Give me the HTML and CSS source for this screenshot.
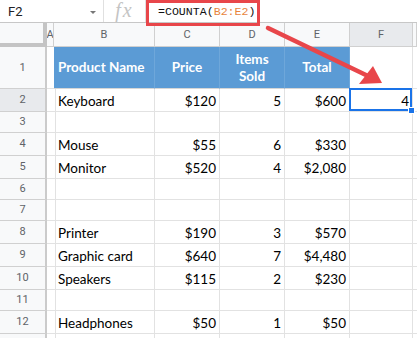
FILE: index.html
```html
<!DOCTYPE html>
<html lang="en">

<head>
    <meta charset="UTF-8">
    <title>COUNTA example</title>
    <link rel="stylesheet" href="styles.css">
</head>

<body>
    <div class="sheet">
        <div class="topbar">
            <div class="namebox"><span>F2</span><span class="caret"></span></div>
            <div class="fx">fx</div>
            <div class="formula">=COUNTA(<span class="range">B2:E2</span>)</div>
        </div>

        <div class="row colhead">
            <div class="c corner"></div>
            <div class="c">A</div>
            <div class="c">B</div>
            <div class="c">C</div>
            <div class="c">D</div>
            <div class="c">E</div>
            <div class="c on">F</div>
            <div class="c"></div>
        </div>

        <div class="row head">
            <div class="c rh">1</div>
            <div class="c"></div>
            <div class="c th left">Product Name</div>
            <div class="c th">Price</div>
            <div class="c th">Items<br>Sold</div>
            <div class="c th">Total</div>
            <div class="c"></div>
            <div class="c"></div>
        </div>

        <div class="row">
            <div class="c rh on">2</div>
            <div class="c"></div>
            <div class="c">Keyboard</div>
            <div class="c num">$120</div>
            <div class="c num">5</div>
            <div class="c num">$600</div>
            <div class="c num active">4</div>
            <div class="c"></div>
        </div>

        <div class="row empty">
            <div class="c rh">3</div>
            <div class="c"></div><div class="c"></div><div class="c"></div><div class="c"></div><div class="c"></div><div class="c"></div><div class="c"></div>
        </div>

        <div class="row">
            <div class="c rh">4</div>
            <div class="c"></div>
            <div class="c">Mouse</div>
            <div class="c num">$55</div>
            <div class="c num">6</div>
            <div class="c num">$330</div>
            <div class="c"></div>
            <div class="c"></div>
        </div>

        <div class="row">
            <div class="c rh">5</div>
            <div class="c"></div>
            <div class="c">Monitor</div>
            <div class="c num">$520</div>
            <div class="c num">4</div>
            <div class="c num">$2,080</div>
            <div class="c"></div>
            <div class="c"></div>
        </div>

        <div class="row empty">
            <div class="c rh">6</div>
            <div class="c"></div><div class="c"></div><div class="c"></div><div class="c"></div><div class="c"></div><div class="c"></div><div class="c"></div>
        </div>

        <div class="row empty">
            <div class="c rh">7</div>
            <div class="c"></div><div class="c"></div><div class="c"></div><div class="c"></div><div class="c"></div><div class="c"></div><div class="c"></div>
        </div>

        <div class="row">
            <div class="c rh">8</div>
            <div class="c"></div>
            <div class="c">Printer</div>
            <div class="c num">$190</div>
            <div class="c num">3</div>
            <div class="c num">$570</div>
            <div class="c"></div>
            <div class="c"></div>
        </div>

        <div class="row">
            <div class="c rh">9</div>
            <div class="c"></div>
            <div class="c">Graphic card</div>
            <div class="c num">$640</div>
            <div class="c num">7</div>
            <div class="c num">$4,480</div>
            <div class="c"></div>
            <div class="c"></div>
        </div>

        <div class="row">
            <div class="c rh">10</div>
            <div class="c"></div>
            <div class="c">Speakers</div>
            <div class="c num">$115</div>
            <div class="c num">2</div>
            <div class="c num">$230</div>
            <div class="c"></div>
            <div class="c"></div>
        </div>

        <div class="row empty">
            <div class="c rh">11</div>
            <div class="c"></div><div class="c"></div><div class="c"></div><div class="c"></div><div class="c"></div><div class="c"></div><div class="c"></div>
        </div>

        <div class="row">
            <div class="c rh">12</div>
            <div class="c"></div>
            <div class="c">Headphones</div>
            <div class="c num">$50</div>
            <div class="c num">1</div>
            <div class="c num">$50</div>
            <div class="c"></div>
            <div class="c"></div>
        </div>

        <!-- row 13 only peeks in at the bottom edge -->
        <div class="row">
            <div class="c rh"></div>
            <div class="c"></div><div class="c"></div><div class="c"></div><div class="c"></div><div class="c"></div><div class="c"></div><div class="c"></div>
        </div>

        <!-- annotation overlays -->
        <div class="callout"></div>
        <svg class="arrow" width="417" height="338" viewBox="0 0 417 338">
            <line x1="268" y1="28" x2="368" y2="76" stroke="#e8464a" stroke-width="4.5" stroke-linecap="round" />
            <polygon points="382,83 359,84 373,66" fill="#e8464a" />
        </svg>
    </div>
</body>

</html>
```

FILE: styles.css
```css
body {
    margin: 0;
    background-color: #fff;
    font-family: 'Lato', 'Liberation Sans', sans-serif;
}

.sheet {
    position: relative;
    width: 417px;
    height: 338px;
    overflow: hidden;
}

/* formula bar */
.topbar {
    display: flex;
    height: 23px;
    box-sizing: border-box;
    border-bottom: 1px solid #c7c7c7;
    font-family: 'Roboto', sans-serif;
}

.namebox {
    width: 104px;
    box-sizing: border-box;
    border-right: 1px solid #e0e0e0;
    padding: 0 7px 0 8px;
    display: flex;
    align-items: center;
    justify-content: space-between;
    font-size: 13px;
    color: #202124;
}

.caret {
    width: 0;
    height: 0;
    border-top: 3px solid #777;
    border-left: 3px solid transparent;
    border-right: 3px solid transparent;
    margin-top: 2px;
}

.fx {
    width: 42px;
    box-sizing: border-box;
    border-right: 1px solid #e0e0e0;
    text-align: center;
    font-family: 'Liberation Serif', serif;
    font-style: italic;
    font-size: 20px;
    letter-spacing: 2px;
    line-height: 21px;
    color: #c4c4c4;
}

.formula {
    padding-left: 12px;
    font-family: 'Liberation Mono', monospace;
    font-size: 11.6px;
    line-height: 24px;
    color: #111;
}

.range {
    color: #e8853d;
}

/* grid */
.row {
    display: grid;
    grid-template-columns: 47px 7px 101px 65px 65px 65px 63px 1fr;
    height: 23px;
}

.row.empty {
    height: 21px;
}

.row.head {
    height: 42px;
}

.c {
    box-sizing: border-box;
    border-right: 1px solid #e2e2e2;
    border-bottom: 1px solid #e2e2e2;
    display: flex;
    align-items: flex-end;
    padding: 0 4px 2px 4px;
    overflow: hidden;
    white-space: nowrap;
    font-size: 13.5px;
    line-height: 16px;
    color: #000;
}

.num {
    justify-content: flex-end;
    padding-right: 3px;
}

.colhead {
    height: 24px;
}

.colhead .c {
    background-color: #f8f9fa;
    border-color: #d0d0d0;
    justify-content: center;
    align-items: center;
    padding: 0;
    font-family: 'Roboto', sans-serif;
    font-size: 11px;
    color: #5f6368;
}

.colhead .corner {
    border-right: 4px solid #c4c4c4;
    border-bottom: 4px solid #c4c4c4;
}

.rh {
    background-color: #f8f9fa;
    border-right: 2px solid #cbcbcb;
    border-bottom-color: #d0d0d0;
    justify-content: center;
    align-items: center;
    padding: 0;
    font-family: 'Roboto', sans-serif;
    font-size: 11px;
    color: #5f6368;
}

.c.on {
    background-color: #e8eaed;
}

.th {
    background-color: #5b9bd5;
    border-right-color: #6ea7da;
    border-bottom-color: #d6d6d6;
    color: #fff;
    font-weight: bold;
    justify-content: center;
    align-items: center;
    text-align: center;
    line-height: 17px;
    padding: 0 4px;
}

.th.left {
    justify-content: flex-start;
}

.active {
    position: relative;
    overflow: visible;
}

.active::after {
    content: "";
    position: absolute;
    left: -1px;
    top: -1px;
    right: 0;
    bottom: 0;
    border: 2px solid #1a73e8;
}

.active::before {
    content: "";
    position: absolute;
    right: -3px;
    bottom: -3px;
    width: 5px;
    height: 5px;
    background-color: #1a73e8;
    border: 1px solid #fff;
    z-index: 1;
}

/* annotation */
.callout {
    position: absolute;
    left: 146px;
    top: 0;
    width: 114px;
    height: 26px;
    box-sizing: border-box;
    border: 3px solid #e8464a;
}

.arrow {
    position: absolute;
    left: 0;
    top: 0;
    pointer-events: none;
}
```
